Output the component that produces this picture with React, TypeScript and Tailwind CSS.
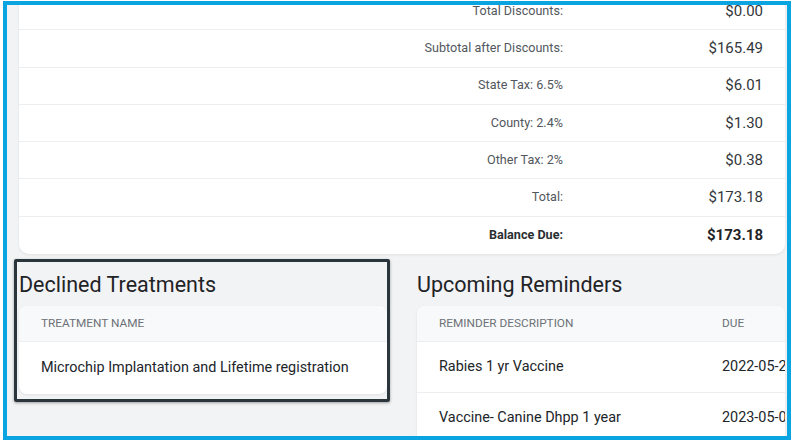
import React from "react";

const summaryRows = [
  { label: "Total Discounts:", value: "$0.00" },
  { label: "Subtotal after Discounts:", value: "$165.49" },
  { label: "State Tax: 6.5%", value: "$6.01" },
  { label: "County: 2.4%", value: "$1.30" },
  { label: "Other Tax: 2%", value: "$0.38" },
  { label: "Total:", value: "$173.18" },
  { label: "Balance Due:", value: "$173.18", bold: true },
];

const reminders = [
  { name: "Rabies 1 yr Vaccine", due: "2022-05-25" },
  { name: "Vaccine- Canine Dhpp 1 year", due: "2023-05-01" },
];

const App = () => {
  return (
    <div
      className="w-[795px] h-[445px] bg-white pt-[1px] pl-[3px]"
      style={{ fontFamily: "Roboto, 'Liberation Sans', sans-serif" }}
    >
      {/* blue frame */}
      <div className="w-[788px] h-[439px] border-4 border-[#0aa5e0] bg-[#f2f3f5] overflow-hidden">
        <div className="w-[778px] pl-[12px]">
          {/* invoice summary card */}
          <div className="-mt-[12px] bg-white rounded-b-[10px] shadow-[0_1px_3px_rgba(0,0,0,0.08)]">
            {summaryRows.map((row, i) => (
              <div
                key={row.label}
                className={`flex items-center h-[37.3px] ${
                  i < summaryRows.length - 1 ? "border-b border-[#eceef1]" : ""
                }`}
              >
                <div
                  className={`w-[544px] text-right text-[12.6px] ${
                    row.bold ? "font-bold text-[#2b2f33]" : "text-[#52575d]"
                  }`}
                >
                  {row.label}
                </div>
                <div
                  className={`flex-1 text-right pr-[22px] text-[15px] ${
                    row.bold ? "font-bold text-[#1f2326]" : "text-[#33373b]"
                  }`}
                >
                  {row.value}
                </div>
              </div>
            ))}
          </div>

          <div className="mt-[5px] grid grid-cols-2 gap-[30px] items-start">
            {/* Declined treatments */}
            <div className="relative pt-[12px]">
              <h2 className="text-[21.5px] leading-[28px] text-[#1f2326] mb-[7px]">
                Declined Treatments
              </h2>
              <div className="bg-white rounded-[8px] overflow-hidden shadow-[0_1px_3px_rgba(0,0,0,0.08)]">
                <div className="h-[36px] flex items-center px-[22px] bg-[#f8f9fa] border-b border-[#eceef1] text-[11.8px] text-[#6c7178]">
                  TREATMENT NAME
                </div>
                <div className="h-[52px] flex items-center px-[22px] text-[14.4px] text-[#212529]">
                  Microchip Implantation and Lifetime registration
                </div>
              </div>
              {/* highlight box */}
              <div className="absolute -left-[5px] -right-[3px] top-0 -bottom-[8px] border-[3px] border-[#2b363c] rounded-[2px] shadow-[0_1px_3px_rgba(0,0,0,0.35)] pointer-events-none" />
            </div>

            {/* Upcoming reminders */}
            <div className="pt-[12px]">
              <h2 className="text-[21.5px] leading-[28px] text-[#1f2326] mb-[7px]">
                Upcoming Reminders
              </h2>
              <div className="bg-white rounded-t-[8px] overflow-hidden shadow-[0_1px_3px_rgba(0,0,0,0.08)]">
                <div className="w-[480px]">
                  <div className="h-[36px] flex items-center bg-[#f8f9fa] border-b border-[#eceef1] text-[11.8px] text-[#6c7178]">
                    <div className="w-[305px] pl-[22px]">REMINDER DESCRIPTION</div>
                    <div className="flex-1">DUE</div>
                  </div>
                  {reminders.map((r) => (
                    <div
                      key={r.name}
                      className="h-[51px] flex items-center border-b border-[#eceef1] text-[14.4px] text-[#212529]"
                    >
                      <div className="w-[305px] pl-[22px]">{r.name}</div>
                      <div className="flex-1">{r.due}</div>
                    </div>
                  ))}
                </div>
              </div>
            </div>
          </div>
        </div>
      </div>
    </div>
  );
};

export default App;
